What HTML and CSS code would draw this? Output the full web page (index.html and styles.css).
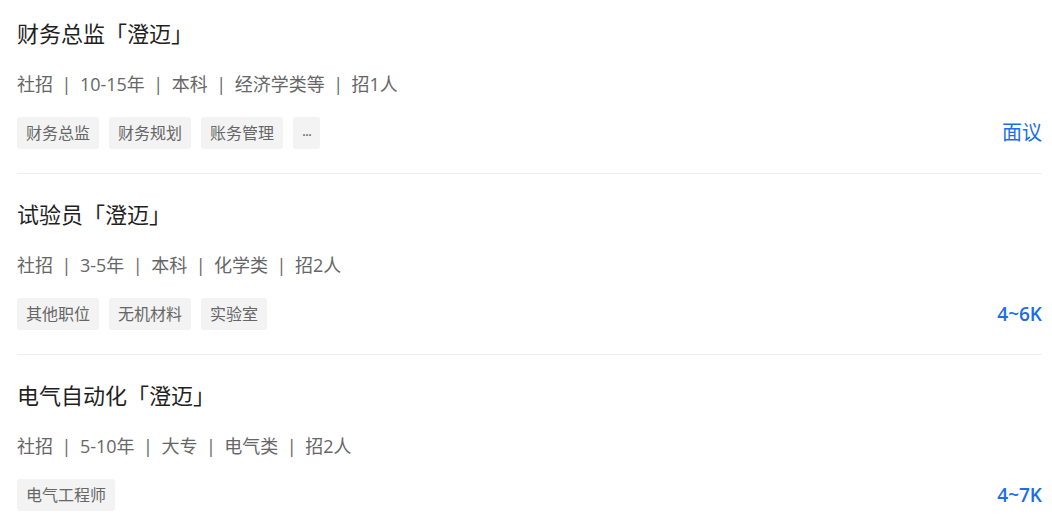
FILE: index.html
```html
<!DOCTYPE html>
<html lang="zh-CN">
<head>
<meta charset="utf-8">
<link rel="stylesheet" href="styles.css">
</head>
<body>
<div class="list">
  <div class="job">
    <div class="title">财务总监「澄迈」</div>
    <div class="meta"><span>社招</span><i>|</i><span>10-15年</span><i>|</i><span>本科</span><i>|</i><span>经济学类等</span><i>|</i><span>招1人</span></div>
    <div class="row">
      <div class="tags"><span class="tag">财务总监</span><span class="tag">财务规划</span><span class="tag">账务管理</span><span class="tag more">···</span></div>
      <div class="salary">面议</div>
    </div>
  </div>
  <div class="job">
    <div class="title">试验员「澄迈」</div>
    <div class="meta"><span>社招</span><i>|</i><span>3-5年</span><i>|</i><span>本科</span><i>|</i><span>化学类</span><i>|</i><span>招2人</span></div>
    <div class="row">
      <div class="tags"><span class="tag">其他职位</span><span class="tag">无机材料</span><span class="tag">实验室</span></div>
      <div class="salary num">4~6K</div>
    </div>
  </div>
  <div class="job">
    <div class="title">电气自动化「澄迈」</div>
    <div class="meta"><span>社招</span><i>|</i><span>5-10年</span><i>|</i><span>大专</span><i>|</i><span>电气类</span><i>|</i><span>招2人</span></div>
    <div class="row">
      <div class="tags"><span class="tag">电气工程师</span></div>
      <div class="salary num">4~7K</div>
    </div>
  </div>
</div>
</body>
</html>
```
FILE: styles.css
```css
html, body {
  margin: 0;
  padding: 0;
  background: #fff;
}
body {
  font-family: "Open Sans", "Noto Sans CJK SC", sans-serif;
  color: #333;
}
.list {
  padding: 0 10px 0 17px;
}
.job {
  padding: 25px 0 24px;
  border-bottom: 1px solid #eeeeee;
}
.job:first-child {
  padding-top: 18px;
}
.title {
  font-size: 22px;
  line-height: 30px;
  height: 30px;
  color: #1f1f1f;
}
.meta {
  margin-top: 24px;
  font-size: 18px;
  line-height: 24px;
  height: 24px;
  color: #666;
  display: flex;
  align-items: center;
}
.meta i {
  font-style: normal;
  color: #666;
  padding: 0 8.5px;
}
.row {
  margin-top: 21px;
  display: flex;
  align-items: center;
  justify-content: space-between;
  height: 32px;
}
.tags {
  display: flex;
  gap: 10px;
}
.tag {
  display: inline-block;
  height: 32px;
  line-height: 32px;
  padding: 0 9px;
  font-size: 16px;
  color: #666;
  background: #f3f3f3;
  border-radius: 3px;
}
.tag.more {
  padding: 0 9px;
  font-size: 15px;
  line-height: 34px;
  letter-spacing: -1px;
}
.salary {
  font-size: 20px;
  color: #1a6fe8;
  line-height: 32px;
}
.salary.num {
  font-size: 19px;
  font-weight: 600;
}
```
